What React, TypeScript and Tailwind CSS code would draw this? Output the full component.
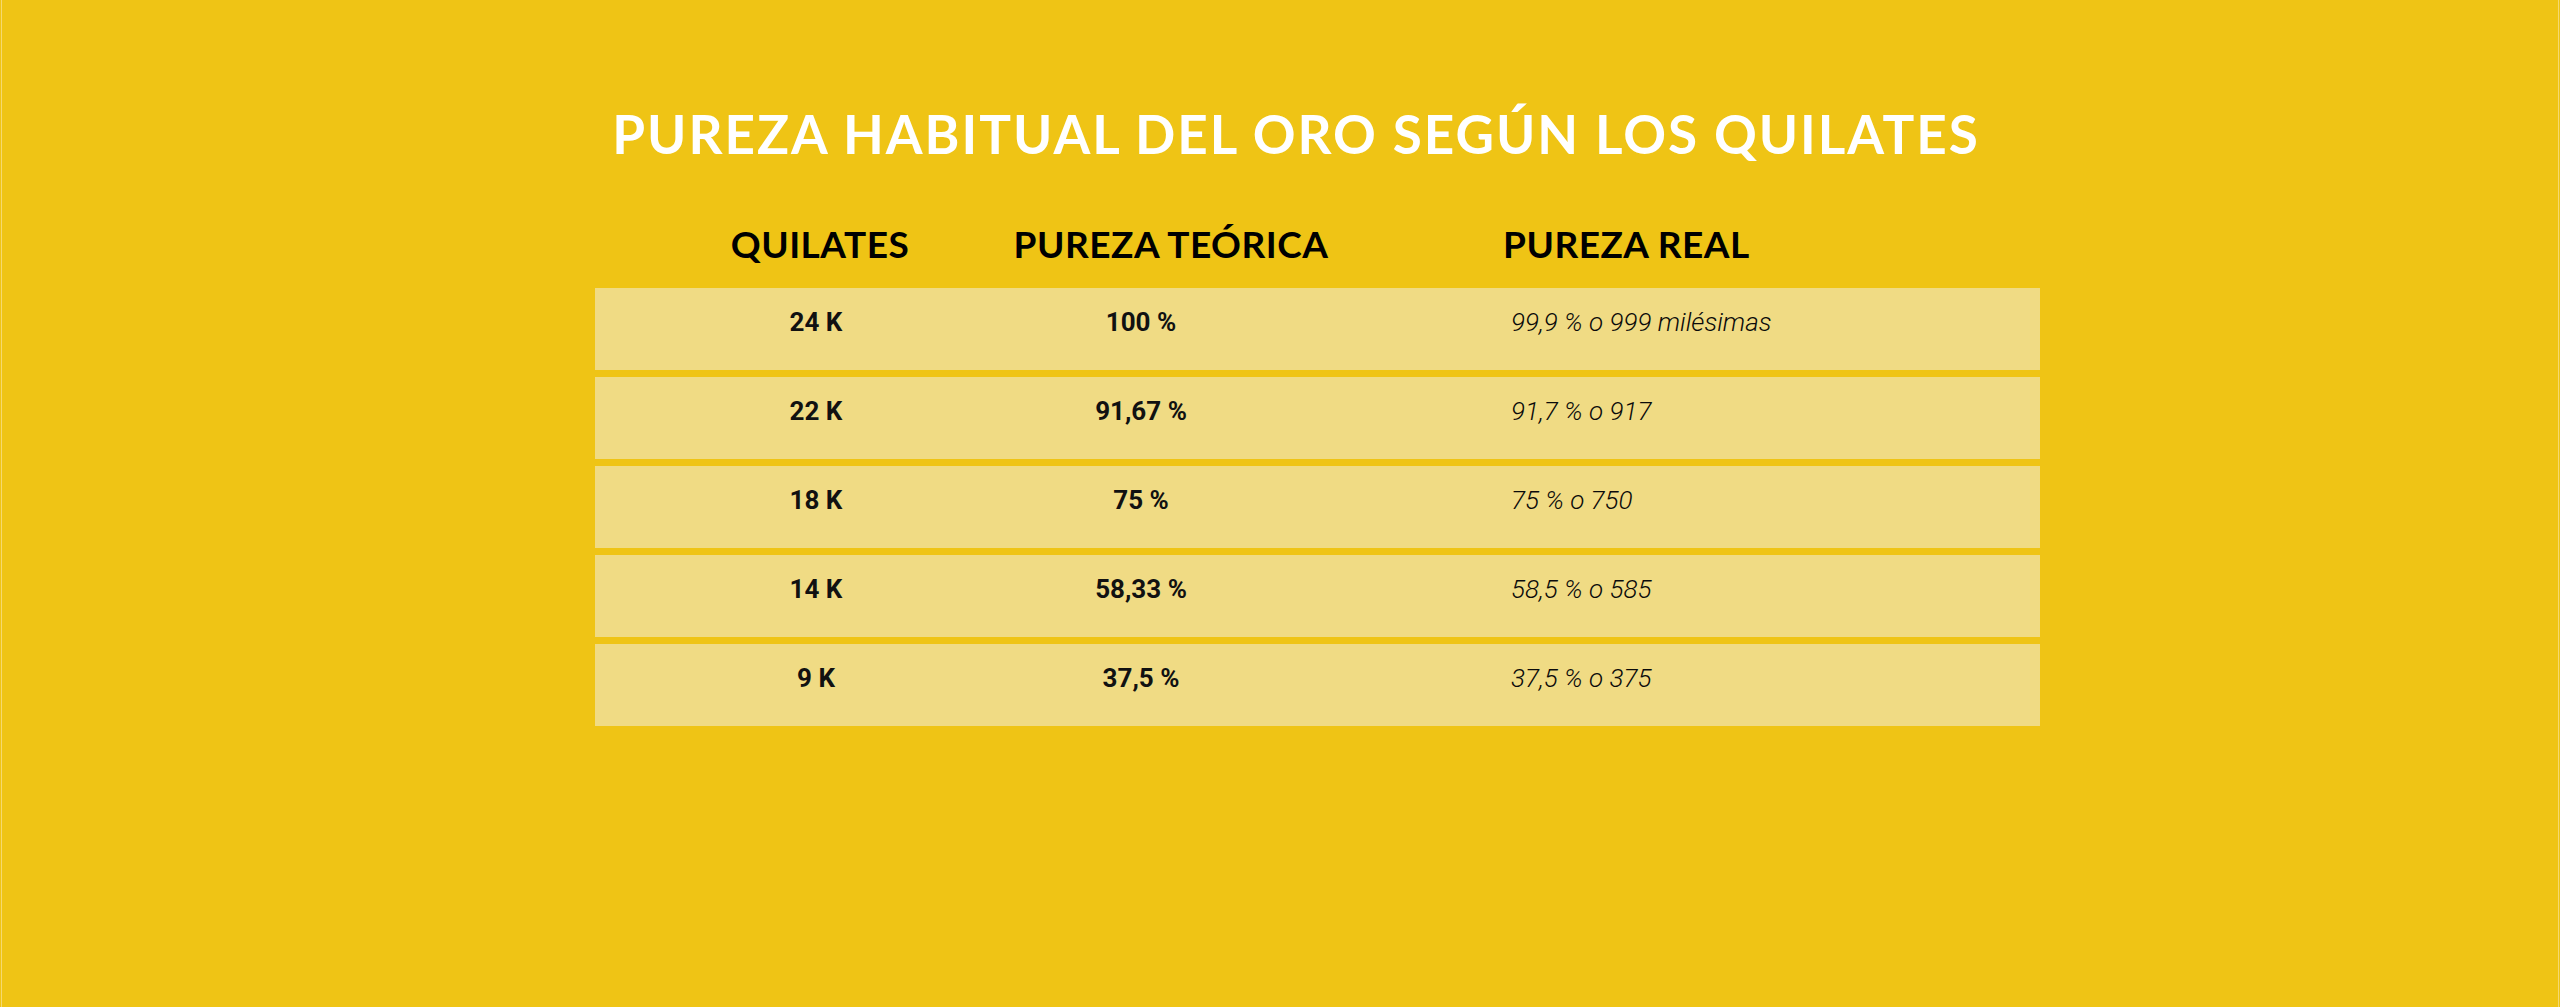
import React from "react";

const rows = [
  { k: "24 K", teorica: "100 %", real: "99,9 % o 999 milésimas" },
  { k: "22 K", teorica: "91,67 %", real: "91,7 % o 917" },
  { k: "18 K", teorica: "75 %", real: "75 % o 750" },
  { k: "14 K", teorica: "58,33 %", real: "58,5 % o 585" },
  { k: "9 K", teorica: "37,5 %", real: "37,5 % o 375" },
];

const App = () => {
  return (
    <div className="min-h-screen bg-[#efc415] px-px">
      <div className="min-h-screen border-x border-[#f5d970] pl-[593px]">
        <div className="w-[1402px] whitespace-nowrap pt-[107px] text-center font-['Lato',sans-serif] text-[53px] font-bold leading-none tracking-[2px] text-white">
          PUREZA HABITUAL DEL ORO SEGÚN LOS QUILATES
        </div>

        <div className="mt-[65px] flex w-[1445px] whitespace-nowrap font-['Lato',sans-serif] text-[37px] font-bold leading-none tracking-[0.5px] text-black">
          <div className="flex w-[450px] justify-center">QUILATES</div>
          <div className="flex w-[252px] justify-center">PUREZA TEÓRICA</div>
          <div className="pl-[206px]">PUREZA REAL</div>
        </div>

        <div className="mt-[26px] flex w-[1445px] flex-col gap-[7px] font-['Roboto',sans-serif] text-[26px] leading-none">
          {rows.map((r) => (
            <div key={r.k} className="flex h-[82px] whitespace-nowrap bg-[#f0db84] pt-[21px]">
              <div className="w-[442px] text-center font-bold text-[#111]">{r.k}</div>
              <div className="w-[208px] text-center font-bold text-[#111]">{r.teorica}</div>
              <div className="pl-[266px] font-light italic text-[#0a0a0a]">{r.real}</div>
            </div>
          ))}
        </div>
      </div>
    </div>
  );
};

export default App;
